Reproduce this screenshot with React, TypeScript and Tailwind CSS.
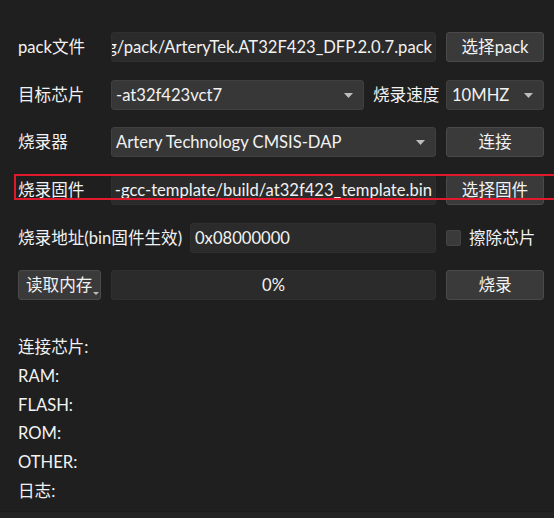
import React from "react";

const font = { fontFamily: '"Lato", "Noto Sans CJK SC", sans-serif' };

function Arrow() {
  return (
    <svg width="9" height="5" viewBox="0 0 9 5" className="shrink-0">
      <path d="M0 0 L9 0 L4.5 5 Z" fill="#bdbdbd" />
    </svg>
  );
}

function Input({ text, className = "", right = false }: { text: string; className?: string; right?: boolean }) {
  return (
    <div
      className={`h-[30px] bg-[#2b2b2b] border border-[#303030] rounded-[3px] flex items-center overflow-hidden whitespace-nowrap ${
        right ? "justify-end pr-[3px]" : "pl-[4px]"
      } ${className}`}
    >
      <span className="shrink-0">{text}</span>
    </div>
  );
}

function Combo({ text, className = "" }: { text: string; className?: string }) {
  return (
    <div
      className={`h-[30px] bg-[#373737] border border-[#404040] rounded-[3px] flex items-center justify-between pl-[4px] pr-[10px] whitespace-nowrap overflow-hidden ${className}`}
    >
      <span>{text}</span>
      <Arrow />
    </div>
  );
}

function Btn({ text, className = "" }: { text: string; className?: string }) {
  return (
    <div
      className={`h-[30px] w-[98px] bg-[#3a3a3a] border border-[#4a4a4a] rounded-[3px] flex items-center justify-center shrink-0 ${className}`}
    >
      {text}
    </div>
  );
}

export default function App() {
  return (
    <div
      className="w-[554px] h-[518px] bg-[#1f1f1f] text-[#f2f2f2] text-[16.6px] flex flex-col overflow-hidden"
      style={font}
    >
      <div className="pl-[18px] pt-[32px] flex flex-col">
        {/* row 1 */}
        <div className="flex items-center h-[30px]">
          <div className="w-[93px] shrink-0">pack文件</div>
          <Input text="og/pack/ArteryTek.AT32F423_DFP.2.0.7.pack" right className="w-[325px]" />
          <Btn text="选择pack" className="ml-[10px]" />
        </div>
        {/* row 2 */}
        <div className="flex items-center h-[30px] mt-[18px]">
          <div className="w-[93px] shrink-0">目标芯片</div>
          <Combo text="-at32f423vct7" className="w-[253px]" />
          <div className="ml-[9px] w-[73px] shrink-0">烧录速度</div>
          <Combo text="10MHZ" className="w-[98px] pl-[5px]" />
        </div>
        {/* row 3 */}
        <div className="flex items-center h-[30px] mt-[17px]">
          <div className="w-[93px] shrink-0">烧录器</div>
          <Combo text="Artery Technology CMSIS-DAP" className="w-[325px]" />
          <Btn text="连接" className="ml-[10px]" />
        </div>
        {/* row 4 */}
        <div className="relative flex items-center h-[30px] mt-[18px]">
          <div className="w-[93px] shrink-0">烧录固件</div>
          <Input text="-gcc-template/build/at32f423_template.bin" right className="w-[325px]" />
          <Btn text="选择固件" className="ml-[10px]" />
          <div className="absolute left-[-4px] top-[-1px] w-[560px] h-[26px] border-2 border-[#e0192c] pointer-events-none" />
        </div>
        {/* row 5 */}
        <div className="flex items-center h-[30px] mt-[18px]">
          <div className="w-[172px] shrink-0">烧录地址(bin固件生效)</div>
          <Input text="0x08000000" className="w-[246px]" />
          <div className="ml-[10px] w-[15px] h-[16px] bg-[#3a3a3a] border border-[#444] rounded-[2px] shrink-0" />
          <div className="ml-[8px]">擦除芯片</div>
        </div>
        {/* row 6 */}
        <div className="flex items-center h-[30px] mt-[17px]">
          <div className="relative w-[83px] h-[30px] bg-[#3a3a3a] border border-[#4a4a4a] rounded-[3px] flex items-center pl-[7px] shrink-0">
            读取内存
            <svg width="6" height="3" viewBox="0 0 6 3" className="absolute right-[1px] bottom-[4px]">
              <path d="M0 0 L6 0 L3 3 Z" fill="#bdbdbd" />
            </svg>
          </div>
          <div className="ml-[10px] w-[325px] h-[30px] bg-[#2b2b2b] border border-[#303030] rounded-[3px] flex items-center justify-center">
            0%
          </div>
          <Btn text="烧录" className="ml-[10px]" />
        </div>
        {/* info */}
        <div className="mt-[33px] flex flex-col leading-[28.8px]">
          <div>连接芯片:</div>
          <div>RAM:</div>
          <div>FLASH:</div>
          <div>ROM:</div>
          <div>OTHER:</div>
          <div>日志:</div>
        </div>
      </div>
      <div className="flex-1" />
      <div className="h-[7px] bg-[#232323] border-t border-[#1a1a1a]" />
    </div>
  );
}
